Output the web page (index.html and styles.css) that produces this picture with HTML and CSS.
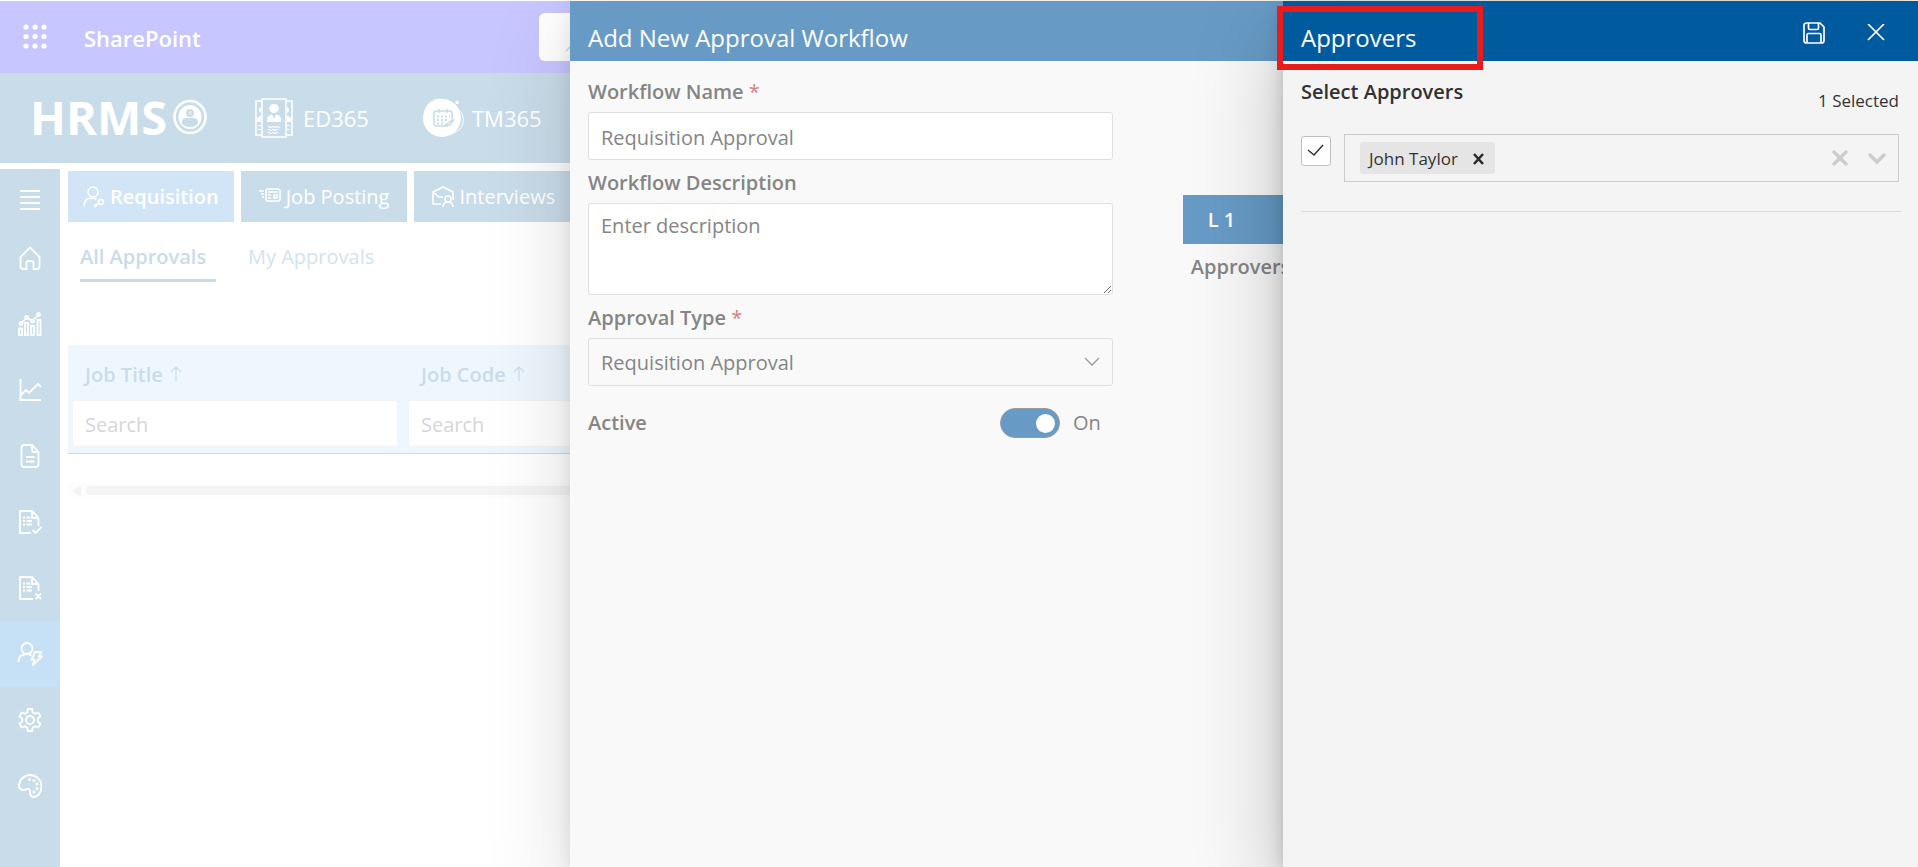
FILE: index.html
```html
<!DOCTYPE html>
<html lang="en">
<head>
<meta charset="utf-8">
<title>HRMS - Approval Workflow</title>
<link rel="stylesheet" href="styles.css">
</head>
<body>
<div class="page">
  <header class="suite">
    <button class="waffle" aria-label="App launcher">
      <svg width="24" height="26" viewBox="0 0 24 26" fill="currentColor"><circle cx="3" cy="3" r="2.6"/><circle cx="12" cy="3" r="2.6"/><circle cx="21" cy="3" r="2.6"/><circle cx="3" cy="12.500" r="2.600"/><circle cx="12" cy="12.500" r="2.600"/><circle cx="21" cy="12.500" r="2.600"/><circle cx="3" cy="22" r="2.600"/><circle cx="12" cy="22" r="2.600"/><circle cx="21" cy="22" r="2.600"/></svg>
    </button>
    <a class="suite-name" href="#">SharePoint</a>
    <div class="suite-search"><svg width="22" height="22" viewBox="0 0 22 22" fill="none" stroke="currentColor" stroke-width="1.500"><circle cx="13" cy="8" r="7"/><path d="M8 13l-7 7"/></svg></div>
  </header>

  <nav class="brandbar" aria-label="Products">
    <a class="logo" href="#">HRMS
      <svg width="34" height="36" viewBox="0 0 34 36"><ellipse cx="17" cy="18" rx="15.500" ry="16" fill="none" stroke="currentColor" stroke-width="2.600"/><ellipse cx="17" cy="18" rx="11.500" ry="12" fill="currentColor"/><circle cx="17" cy="14" r="4" fill="#c9dce9"/><path d="M9 25v-2c0-4 3-4 8-4s8 0 8 4v2c-4 4-12 4-16 0z" fill="#c9dce9"/><circle cx="17" cy="14" r="2" fill="currentColor" opacity=".35"/></svg>
    </a>
    <a class="product" href="#">
      <svg width="38" height="40" viewBox="0 0 38 40" fill="none" stroke="currentColor" stroke-width="1.500"><path d="M7 3H1v34h6M31 3h6v34h-6M7 1h24v38H7z"/><g fill="currentColor" stroke="none"><circle cx="19" cy="10.500" r="4.600"/><path d="M12 24v-3c0-3 3-4 5-4.500l2 4 2-4c2 .5 5 1.500 5 4.500v3zM6 9v6c-1-.5-2-1-2-3s1-2.500 2-3zM2 24v-3c0-2 2-3 4-3.500V24zM32 9v6c1-.5 2-1 2-3s-1-2.500-2-3zM36 24v-3c0-2-2-3-4-3.500V24z"/></g><path stroke-width="1.200" d="M13 29q1-1.500 2 0t2 0 2 0 2 0 2 0 2 0M13 32q1-1.500 2 0t2 0 2 0 2 0 2 0M13 35q1-1.500 2 0t2 0 2 0 2 0 2 0M3 28q1-1.500 3 0M3 32q1-1.500 3 0M32 28q1-1.500 3 0M32 32q1-1.500 3 0"/></svg>
      ED365
    </a>
    <a class="product product-wide" href="#">
      <svg width="42" height="40" viewBox="0 0 42 40"><circle cx="16.500" cy="16" r="15" fill="none" stroke="currentColor"/><circle cx="27" cy="22" r="13.500" fill="none" stroke="currentColor"/><circle cx="13" cy="26" r="10" fill="none" stroke="currentColor"/><circle cx="19" cy="20" r="19" fill="currentColor"/><circle cx="34" cy="4.500" r="1.700" fill="currentColor"/><g fill="none" stroke="#c9dce9" stroke-width="1.500"><path d="M25 28H13q-2 0-2-2V15q0-2 2-2h14q2 0 2 2v6M16 11v4M24 11v4M21 28l10-7-4 6z"/><path stroke-width="2" stroke-dasharray="2 2" d="M14 18.500h13M14 22h11M14 25.500h8"/></g></svg>
      TM365
    </a>
  </nav>

  <div class="body">
    <nav class="side" aria-label="Main">
      <button class="side-menu" aria-label="Menu"><svg width="20" height="22" viewBox="0 0 20 22"><path d="M0 2h20M0 8h20M0 14h20M0 20h20"/></svg></button>
      <button class="side-item" aria-label="Home"><svg width="24" height="24" viewBox="0 0 24 24"><path d="M2.500 11L12 1.500 21.500 11v9.500q0 2.500-2.500 2.500h-3.500v-6q0-2-2-2h-3q-2 0-2 2v6H5q-2.500 0-2.500-2.500z"/></svg></button>
      <button class="side-item" aria-label="Analytics"><svg width="24" height="24" viewBox="0 0 24 24"><path d="M1 16.500h3V23H1zM7 11h3v12H7zM13 14h3v9h-3zM19.500 8h3v15h-3z"/><circle cx="3" cy="11.500" r="1.500"/><circle cx="8.700" cy="5.500" r="1.500"/><circle cx="14.500" cy="9" r="1.500"/><circle cx="20.500" cy="2.500" r="1.500"/><path d="M4 10.500l3.700-4M10 6.300l3.200 2M15.600 8l4-4.500"/></svg></button>
      <button class="side-item" aria-label="Trends"><svg width="24" height="24" viewBox="0 0 24 24"><path d="M2.500 1v21H23M3 17l5-5 3 3 9-9 3 3"/></svg></button>
      <button class="side-item" aria-label="Documents"><svg width="24" height="24" viewBox="0 0 24 24"><path d="M6 1h8l6.500 7v12.500q0 2.500-2.500 2.500H6q-2.500 0-2.500-2.500v-17Q3.500 1 6 1zM14 1v4.500Q14 8 16.500 8h4M8 13h8.500M8 17.500h8.500"/></svg></button>
      <button class="side-item" aria-label="Approved"><svg width="24" height="24" viewBox="0 0 24 24"><path d="M13 23H2V1h12l6.500 7v8M14 1v7h6.500M5 7.500h2M8.500 7.500H12M5 11h2M8.500 11H14M5 14.500h2M8.500 14.500H14M14.500 20l3 3 6-6"/></svg></button>
      <button class="side-item" aria-label="Rejected"><svg width="24" height="24" viewBox="0 0 24 24"><path d="M15 23H2V1h12l6.500 7v7M14 1v7h6.500M5 7.500h2M8.500 7.500H12M5 11h2M8.500 11H14M5 14.500h2M8.500 14.500H14M17.500 17.500l5.500 5.500M23 17.500L17.500 23"/></svg></button>
      <button class="side-item side-active" aria-label="Workflows"><svg width="26" height="24" viewBox="0 0 26 24"><circle cx="10" cy="6.500" r="5.500"/><path d="M1.500 20c0-5 3-8 8.500-8 2 0 3.500.5 4.500 1.500M18 10h6l-2 4.500h3L16 23l1.500-5.500h-3z"/></svg></button>
      <button class="side-item" aria-label="Settings"><svg width="24" height="24" viewBox="0 0 24 24"><circle cx="12" cy="12" r="4"/><path d="M9.800 1h4.400l.6 3.500 2 1.200 3.400-1.200L22.500 8l-2.700 2.600v2.800l2.700 2.600-2.300 3.500-3.400-1.200-2 1.200-.6 3.500H9.800l-.6-3.500-2-1.200-3.400 1.200L1.500 16l2.700-2.600v-2.800L1.500 8l2.300-3.500 3.400 1.200 2-1.200z"/></svg></button>
      <button class="side-item" aria-label="Theme"><svg width="24" height="24" viewBox="0 0 24 24"><path d="M1 12C1 6 6 1 12 1s11.500 5 11.500 11-3.500 11-7.500 11c-3 0-4-2-4-5 0-2.500-1-3.500-3-3-2 .4-2.500 1.500-5 .8C2 15 1 14 1 12z"/><g fill="currentColor" stroke="none"><circle cx="11.500" cy="5.500" r="1.500"/><circle cx="16" cy="6.500" r="1.500"/><circle cx="19" cy="10" r="1.500"/><circle cx="19" cy="14.500" r="1.500"/><circle cx="16" cy="18" r="1.500"/></g></svg></button>
    </nav>

    <main class="main">
      <nav class="tabs" aria-label="Modules">
        <button class="tab tab-on"><svg width="22" height="22" viewBox="0 0 22 22"><circle cx="10" cy="6" r="5"/><path d="M1 20c0-5 3-8 8-8 2 0 3.500.5 4.500 1.500M12 20l4-3"/><circle cx="18" cy="16" r="2.500"/><circle cx="12.500" cy="20" r=".6"/></svg>Requisition</button>
        <button class="tab"><svg width="22" height="22" viewBox="0 0 22 22"><path d="M9 3h10q2 0 2 2v8q0 2-2 2H9q-2 0-2-2V5q0-2 2-2zM0 5h5M2 8h3M3 11h2M9 6h10M9 9h3M9 12h3M15 9h3v3h-3z"/></svg>Job Posting</button>
        <button class="tab"><svg width="22" height="22" viewBox="0 0 22 22"><path d="M9 18H1V6l10-5 10 5v8M1 6l6 5h4"/><circle cx="16" cy="13" r="3"/><path d="M11 21c0-3 2-5 5-5s5 2 5 5"/></svg>Interviews</button>
      </nav>
      <nav class="pivot" aria-label="Approvals">
        <a class="pivot-item pivot-on" href="#">All Approvals</a>
        <a class="pivot-item" href="#">My Approvals</a>
      </nav>
      <table class="grid">
        <thead>
          <tr><th scope="col">Job Title<svg width="12" height="16" viewBox="0 0 12 16"><path d="M6 15V1M1 6l5-5 5 5"/></svg></th><th scope="col">Job Code<svg width="12" height="16" viewBox="0 0 12 16"><path d="M6 15V1M1 6l5-5 5 5"/></svg></th></tr>
          <tr><td><input class="filter" type="text" placeholder="Search" aria-label="Search job title"></td><td><input class="filter" type="text" placeholder="Search" aria-label="Search job code"></td></tr>
        </thead>
      </table>
      <div class="scroll"><svg width="8" height="10" viewBox="0 0 8 10"><path d="M0 5Q3 1 7 0q1 0 1 2v6q0 2-1 2Q3 9 0 5z"/></svg><span class="scroll-thumb"></span></div>
    </main>
  </div>

  <section class="panel panel-form" aria-label="Add New Approval Workflow">
    <header class="panel-head"><h1 class="panel-title">Add New Approval Workflow</h1></header>
    <div class="form-row">
      <form class="form">
        <label class="label" for="wname">Workflow Name <span class="req">*</span></label>
        <input class="field" id="wname" type="text" value="Requisition Approval">
        <label class="label" for="wdesc">Workflow Description</label>
        <textarea class="field field-area" id="wdesc" placeholder="Enter description"></textarea>
        <label class="label" for="wtype">Approval Type <span class="req">*</span></label>
        <div class="select-wrap">
          <select class="field field-select" id="wtype"><option>Requisition Approval</option></select>
          <svg class="chev" width="16" height="10" viewBox="0 0 16 10"><path d="M1 1l7 7 7-7"/></svg>
        </div>
        <div class="active-row">
          <label class="label" for="active">Active</label>
          <div class="switch-box"><input class="switch" id="active" type="checkbox" role="switch" checked><span class="switch-text">On</span></div>
        </div>
      </form>
      <div class="level">
        <div class="level-name">L 1</div>
        <div class="level-label">Approvers</div>
      </div>
    </div>
  </section>

  <section class="panel panel-side" aria-label="Approvers">
    <header class="panel-head panel-head-solid">
      <h2 class="panel-title">Approvers</h2>
      <div class="head-actions">
        <button class="icon-btn" aria-label="Save"><svg width="22" height="22" viewBox="0 0 22 22"><path d="M3.500 1H17l4 4v13.500q0 2.500-2.500 2.500h-15Q1 21 1 18.500v-15Q1 1 3.500 1zM5.500 1v5q0 1.500 1.500 1.500h7q1.500 0 1.500-1.500V1M4 21v-8q0-1.500 1.500-1.500h11q1.500 0 1.500 1.500v8"/></svg></button>
        <button class="icon-btn" aria-label="Close"><svg width="18" height="18" viewBox="0 0 18 18"><path d="M1 0l16 16M17 0L1 16"/></svg></button>
      </div>
    </header>
    <div class="side-body">
      <div class="side-top"><label class="label label-dark" for="who">Select Approvers</label><span class="count">1 Selected</span></div>
      <div class="pick-row">
        <label class="check"><input class="check-box" type="checkbox" checked aria-label="Use these approvers"><svg width="18" height="13" viewBox="0 0 18 13"><path d="M1 6l6 5L16 1"/></svg></label>
        <div class="picker">
          <span class="chip">John Taylor<button class="chip-x" aria-label="Remove John Taylor"><svg width="12" height="12" viewBox="0 0 12 12"><path d="M1 1l9 10M10 1L1 11"/></svg></button></span>
          <input class="picker-input" id="who" type="text">
          <button class="picker-btn" aria-label="Clear all"><svg width="16" height="16" viewBox="0 0 16 16"><path d="M2 2l12 12M14 2L2 14"/></svg></button>
          <button class="picker-btn" aria-label="Open list"><svg width="18" height="16" viewBox="0 0 18 16"><path d="M2 5l7 7 7-7"/></svg></button>
        </div>
      </div>
    </div>
  </section>
  <div class="callout"></div>
</div>
</body>
</html>
```
FILE: styles.css
```css
* { box-sizing: border-box; }
body {
  margin: 0;
  background: #fff;
  font-family: "Segoe UI", "Open Sans", "Noto Sans", sans-serif;
  font-size: 20px;
  line-height: 28px;
  color: #333;
}
button, input, select, textarea { font: inherit; color: inherit; margin: 0; }
button { border: 0; background: none; padding: 0; display: flex; align-items: center; justify-content: center; }
a { color: inherit; text-decoration: none; }
svg { display: block; flex: none; }

.page {
  position: relative;
  display: flex;
  flex-direction: column;
  min-height: 100vh;
  padding-top: 1px;
  overflow: hidden;
}

/* top bars */
.suite { display: flex; align-items: center; height: 72px; padding-left: 23px; background: #c8c6ff; color: #fff; }
.waffle { width: 24px; }
.suite-name { margin-left: 37px; width: 455px; padding-top: 1px; font-size: 22px; font-weight: 600; }
.suite-search { width: 585px; height: 48px; padding: 18px 26px; border-radius: 6px; background: #fff; color: #c9dce9; }
.brandbar { display: flex; align-items: center; height: 90px; padding-left: 30px; background: #c9dce9; color: #fff; }
.logo { display: flex; align-items: center; gap: 6px; width: 225px; padding-bottom: 2px; font-size: 47px; font-weight: 700; }
.product { display: flex; align-items: center; gap: 10px; width: 168px; font-size: 22px; }
.product-wide { gap: 7px; }

/* side navigation */
.body { display: flex; flex: 1; margin-top: 6px; }
.side { width: 60px; background: #c9dce9; color: #fff; }
.side svg { fill: none; stroke: currentColor; stroke-width: 2; }
.side-menu { width: 100%; height: 56px; padding-top: 5px; }
.side-item { width: 100%; height: 66px; }
.side-item svg { stroke-width: 1.8; }
.side-active { background: #c6e1f5; }

/* content */
.main { flex: 1; min-width: 0; padding: 2px 0 0 8px; }
.tabs { display: flex; gap: 7px; }
.tab { gap: 5px; height: 51px; padding: 0 18px; background: #c9dce9; color: #fff; white-space: nowrap; }
.tab svg { fill: none; stroke: currentColor; stroke-width: 1.6; }
.tab-on { padding: 0 15px; background: #d2e5f6; font-weight: 600; }
.pivot { display: flex; gap: 32px; padding: 15px 12px 0; color: #d3e3ee; }
.pivot-item { height: 45px; line-height: 40px; }
.pivot-on { width: 136px; border-bottom: 3px solid #c9dce9; color: #c9dce9; font-weight: 600; }
.grid { width: 1840px; margin-top: 63px; border-collapse: collapse; table-layout: fixed; background: #eff7fe; border-bottom: 1px solid #c9dce9; }
.grid th { width: 336px; height: 55px; padding: 4px 17px 0; text-align: left; font-weight: 600; color: #c9dce9; }
.grid th:last-child { width: auto; }
.grid th svg { display: inline-block; margin-left: 7px; fill: none; stroke: currentColor; stroke-width: 1.2; }
.grid td { padding: 0 6px 6px 4px; }
.filter { display: block; width: 100%; height: 47px; padding: 2px 12px 0; border: 1px solid #f3f3f3; background: #fff; }
.filter::placeholder { color: #d6d6d6; opacity: 1; }
.scroll { display: flex; align-items: center; gap: 5px; width: 1840px; height: 15px; margin-top: 29px; padding-left: 5px; background: #fdfdfd; }
.scroll svg { fill: #f3f3f3; }
.scroll-thumb { flex: 1; height: 9px; border-radius: 5px; background: #f4f4f4; }

/* overlay panels */
.panel { position: absolute; top: 1px; right: 0; bottom: 0; }
.panel-form { left: 570px; background: #f9f9f9; color: #858585; box-shadow: 0 32px 84px rgba(0, 0, 0, .14), 0 6px 18px rgba(0, 0, 0, .1); }
.panel-side { left: 1283px; background: #f4f4f4; box-shadow: 0 32px 84px rgba(0, 0, 0, .24), 0 6px 18px rgba(0, 0, 0, .18); }
.panel-head { display: flex; justify-content: space-between; height: 60px; padding: 0 18px; background: #679bc6; color: #fff; }
.panel-head-solid { padding: 0 33px 0 18px; background: #005a9e; }
.panel-title { margin: 0; padding-top: 9px; font-size: 24px; font-weight: 400; line-height: 56px; }
.head-actions { display: flex; gap: 42px; padding-top: 3px; }
.icon-btn svg { fill: none; stroke: currentColor; stroke-width: 1.7; }

.form-row { display: flex; gap: 70px; padding: 17px 18px; }
.form { display: flex; flex-direction: column; width: 40%; }
.label { margin-bottom: 6px; font-weight: 600; }
.label-dark { color: #323130; }
.req { color: #cc8184; font-weight: 400; }
.field { display: block; width: 100%; height: 48px; margin-bottom: 9px; padding: 2px 12px 0; border: 1px solid #e0e0e0; border-radius: 3px; background: #fff; }
.field-area { height: 92px; padding-top: 8px; resize: vertical; }
.field::placeholder { color: #858585; opacity: 1; }
.select-wrap { position: relative; }
.field-select { appearance: none; background: transparent; }
.chev { position: absolute; right: 13px; top: 19px; fill: none; stroke: #999; stroke-width: 1.3; }
.active-row { display: flex; align-items: center; justify-content: space-between; margin-top: 13px; padding-right: 12px; }
.active-row .label { margin: 0; }
.switch-box { display: flex; align-items: center; gap: 13px; }
.switch { appearance: none; display: flex; align-items: center; justify-content: flex-end; width: 60px; height: 30px; padding-right: 4px; border: 1px solid #999; border-radius: 15px; background: #679bc6; }
.switch::before { content: ""; width: 19px; height: 19px; border-radius: 50%; background: #fff; }

.level { flex: 1; padding-top: 117px; }
.level-name { height: 49px; padding-left: 25px; background: #679bc6; color: #fff; font-weight: 600; line-height: 50px; }
.level-label { padding: 9px 8px; font-weight: 600; }

.side-body { margin: 0 16px 0 18px; padding: 17px 0 29px; border-bottom: 1px solid #dadada; }
.side-top { display: flex; justify-content: space-between; padding-right: 3px; }
.count { padding-top: 9px; font-size: 17px; }
.pick-row { display: flex; gap: 13px; margin-top: 19px; padding-right: 3px; }
.check { position: relative; width: 30px; height: 30px; margin-top: 2px; }
.check-box { appearance: none; display: block; width: 30px; height: 30px; border: 1px solid #c0bfbd; border-radius: 3px; background: #fff; }
.check svg { position: absolute; left: 6px; top: 8px; fill: none; stroke: #333; stroke-width: 1.5; }
.picker { display: flex; flex: 1; align-items: center; gap: 20px; height: 48px; padding: 0 12px 0 15px; border: 1px solid #ccc; }
.chip { display: flex; align-items: center; gap: 15px; height: 32px; padding: 2px 10px 0 9px; border-radius: 3px; background: #e5e5e5; font-size: 17px; }
.chip svg, .picker-btn svg { fill: none; stroke: #2b2b2b; stroke-width: 2.6; }
.picker-btn svg { stroke: #ccc; stroke-width: 3.4; stroke-linecap: round; }
.picker-input { flex: 1; min-width: 0; border: 0; background: transparent; }

.callout { position: absolute; left: 1277px; top: 6px; width: 206px; height: 64px; border: 6px solid #e81c1c; }
```
